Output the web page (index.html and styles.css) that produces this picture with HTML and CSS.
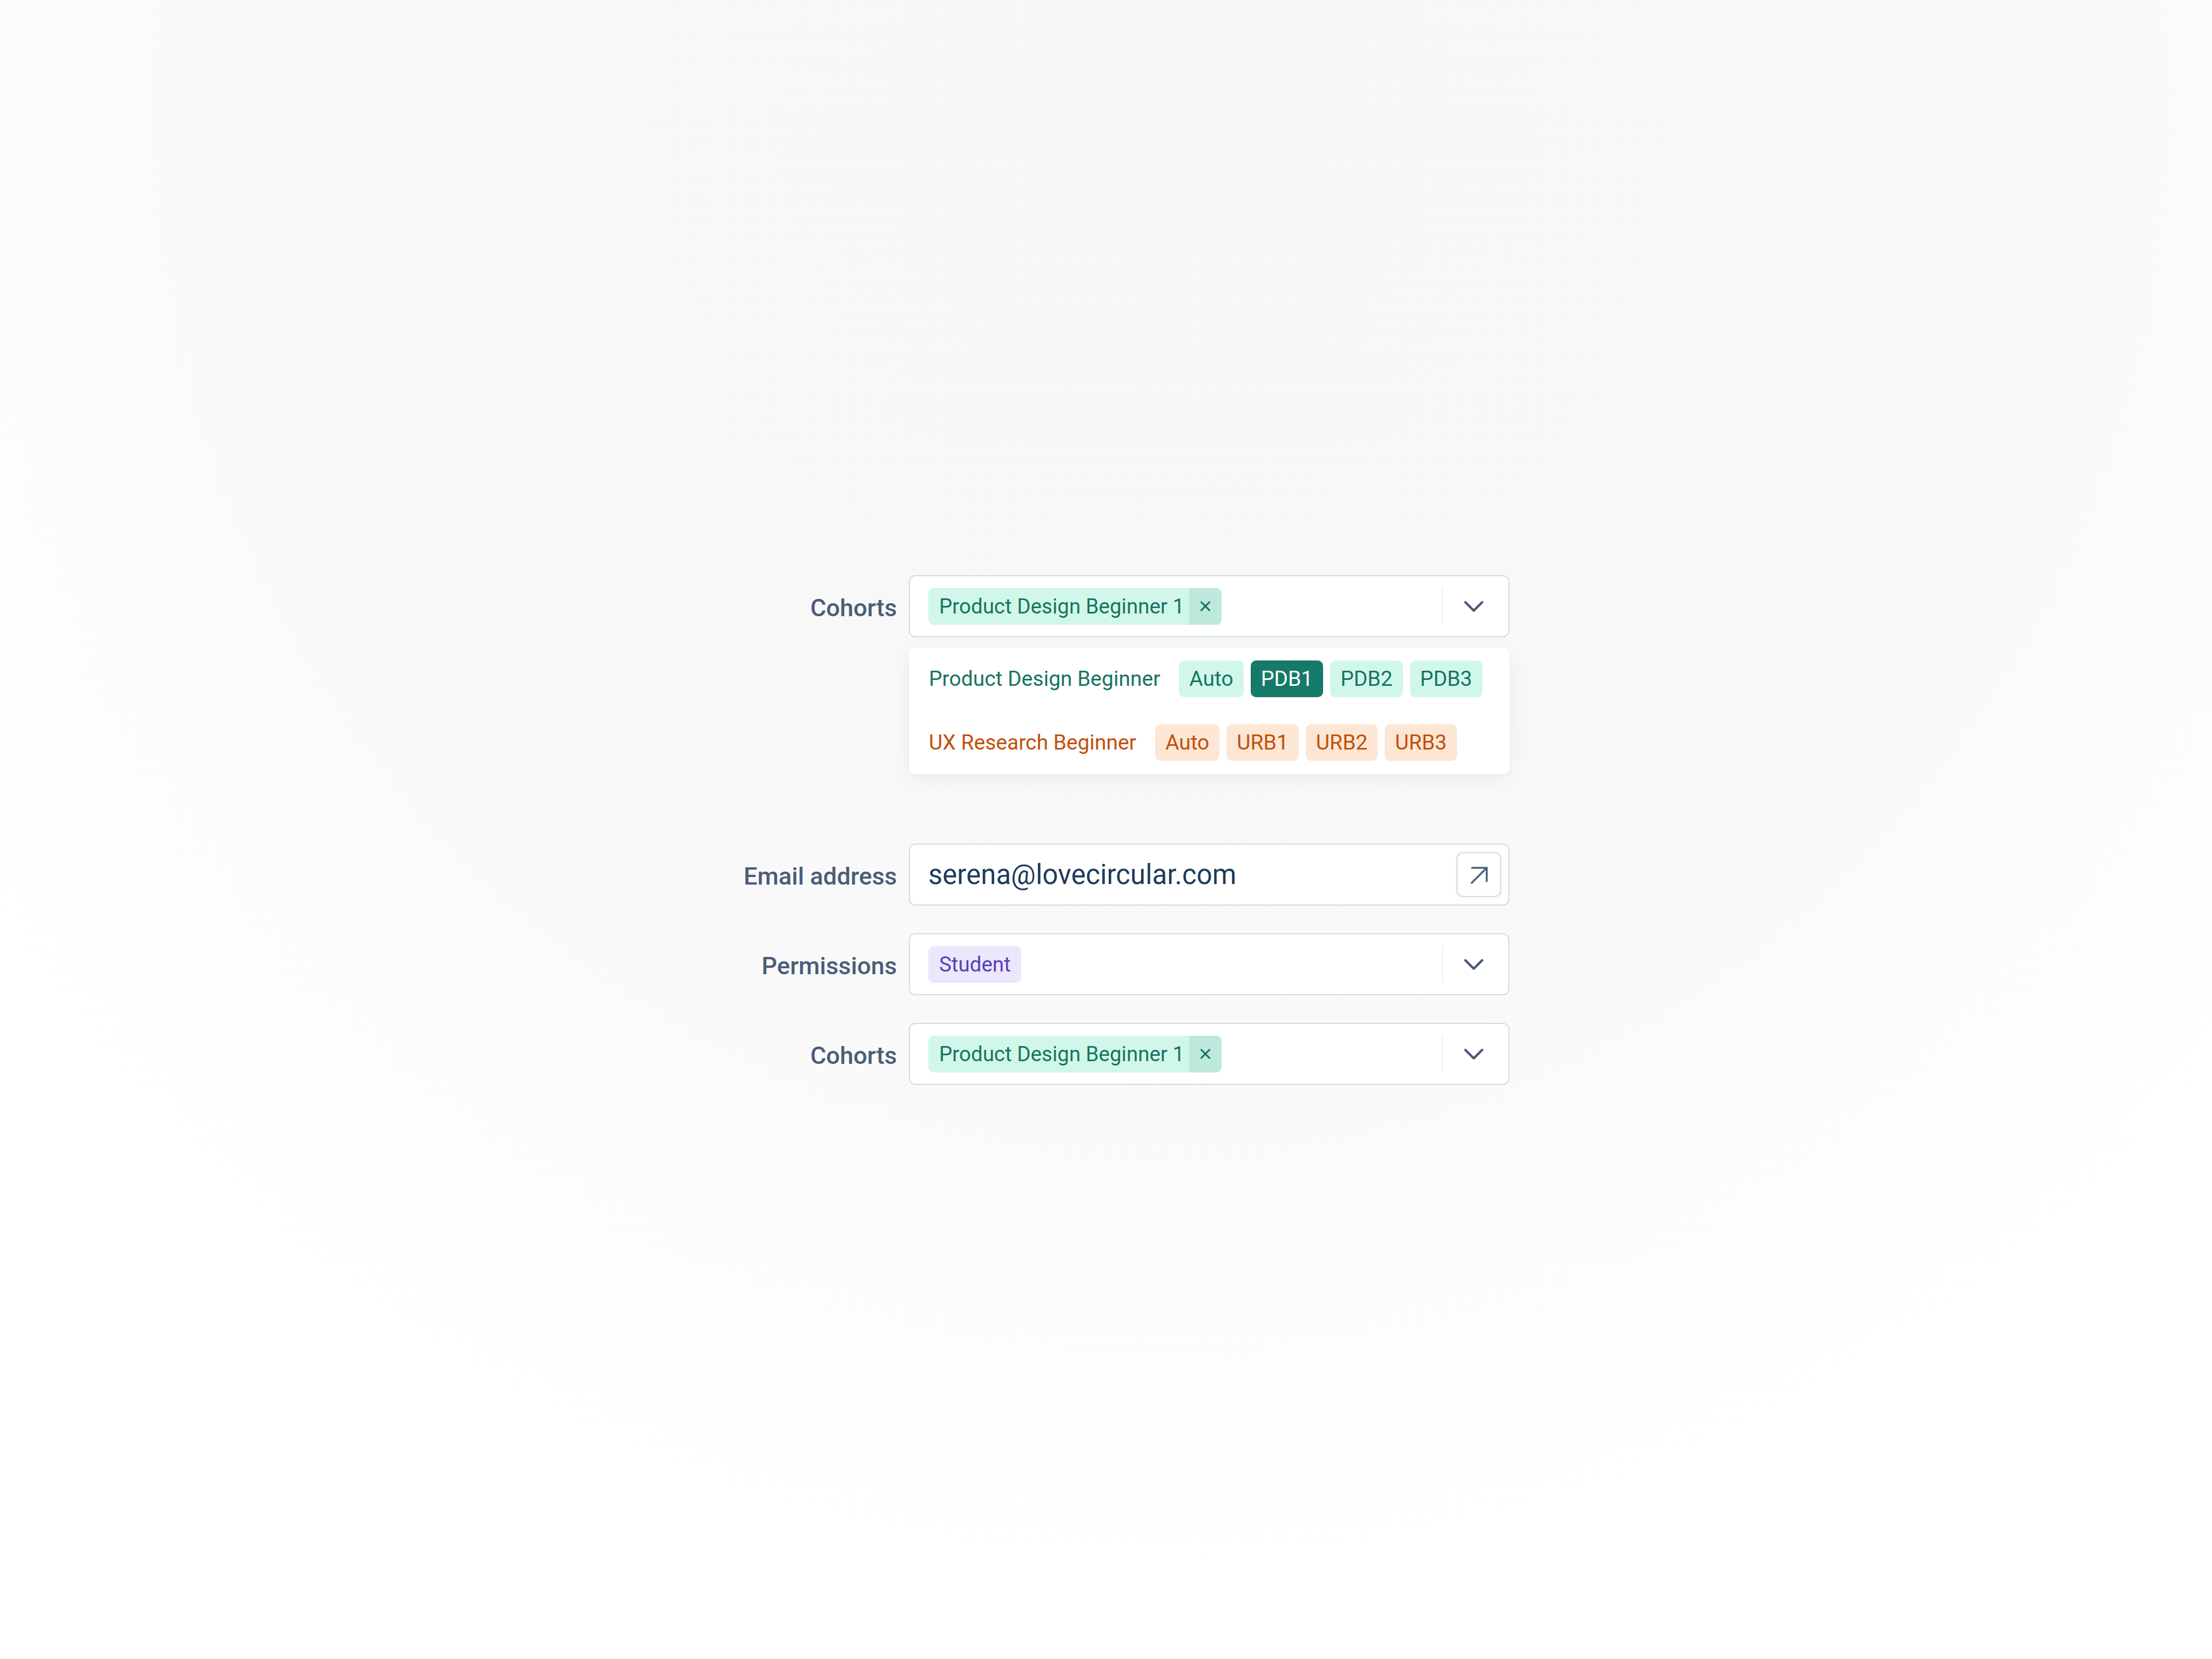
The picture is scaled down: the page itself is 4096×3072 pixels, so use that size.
FILE: index.html
```html
<!DOCTYPE html>
<html lang="en">
<head>
<meta charset="utf-8">
<title>Cohorts form</title>
<link rel="stylesheet" href="styles.css">
</head>
<body>
<main class="page">
  <div class="form">
    <div class="row">
      <div class="label">Cohorts</div>
      <div class="field-col">
        <div class="field">
          <div class="field-content">
            <span class="tag tag-teal"><span class="tag-text">Product Design Beginner 1</span><span class="tag-x"><svg viewBox="0 0 20 20" width="20" height="20"><path d="M2 2L18 18M18 2L2 18"/></svg></span></span>
          </div>
          <div class="field-sep"></div>
          <div class="field-caret"><svg viewBox="0 0 24 24" width="62" height="62"><path d="M6 9l6 6 6-6"/></svg></div>
        </div>
        <div class="menu">
          <div class="menu-row">
            <span class="menu-label teal">Product Design Beginner</span>
            <div class="pills">
              <span class="pill pill-teal">Auto</span>
              <span class="pill pill-teal-active">PDB1</span>
              <span class="pill pill-teal">PDB2</span>
              <span class="pill pill-teal">PDB3</span>
            </div>
          </div>
          <div class="menu-row">
            <span class="menu-label orange">UX Research Beginner</span>
            <div class="pills">
              <span class="pill pill-orange">Auto</span>
              <span class="pill pill-orange">URB1</span>
              <span class="pill pill-orange">URB2</span>
              <span class="pill pill-orange">URB3</span>
            </div>
          </div>
        </div>
      </div>
    </div>

    <div class="row row-email">
      <div class="label">Email address</div>
      <div class="field-col">
        <div class="field">
          <div class="field-content">
            <span class="email">serena@lovecircular.com</span>
          </div>
          <div class="open-btn"><svg viewBox="0 0 83 83" width="83" height="83"><path d="M27 58L56 29M27.5 29H56V55"/></svg></div>
        </div>
      </div>
    </div>

    <div class="row">
      <div class="label">Permissions</div>
      <div class="field-col">
        <div class="field">
          <div class="field-content">
            <span class="tag tag-purple"><span class="tag-text">Student</span></span>
          </div>
          <div class="field-sep"></div>
          <div class="field-caret"><svg viewBox="0 0 24 24" width="62" height="62"><path d="M6 9l6 6 6-6"/></svg></div>
        </div>
      </div>
    </div>

    <div class="row">
      <div class="label">Cohorts</div>
      <div class="field-col">
        <div class="field">
          <div class="field-content">
            <span class="tag tag-teal"><span class="tag-text">Product Design Beginner 1</span><span class="tag-x"><svg viewBox="0 0 20 20" width="20" height="20"><path d="M2 2L18 18M18 2L2 18"/></svg></span></span>
          </div>
          <div class="field-sep"></div>
          <div class="field-caret"><svg viewBox="0 0 24 24" width="62" height="62"><path d="M6 9l6 6 6-6"/></svg></div>
        </div>
      </div>
    </div>
  </div>
</main>
</body>
</html>
```

FILE: styles.css
```css
html, body {
  margin: 0;
  padding: 0;
}

body {
  min-height: 3072px;
  font-family: Roboto, "Liberation Sans", sans-serif;
  background-color: #ffffff;
  background-image: radial-gradient(ellipse 2600px 2700px at 2150px 200px,
      #f7f7f8 0%,
      #f8f8f8 45%,
      #f9f9f9 65%,
      #fcfcfc 83%,
      #ffffff 100%);
  background-repeat: no-repeat;
}

.page {
  padding-top: 1065px;
}

.form {
  display: flex;
  flex-direction: column;
  gap: 51px;
  margin-left: 1278px;
  width: 1517px;
}

.row {
  display: flex;
  align-items: flex-start;
  gap: 22px;
}

.row-email {
  margin-top: 77px;
}

.label {
  width: 383px;
  height: 115px;
  display: flex;
  align-items: center;
  justify-content: flex-end;
  padding-top: 6px;
  box-sizing: border-box;
  font-size: 45px;
  font-weight: 500;
  color: #4a5d78;
  white-space: nowrap;
}

.field-col {
  width: 1112px;
  display: flex;
  flex-direction: column;
  gap: 19px;
}

.field {
  height: 115px;
  box-sizing: border-box;
  border: 2px solid #d6dae1;
  border-radius: 12px;
  background: #ffffff;
  display: flex;
  align-items: center;
}

.field-content {
  flex: 1;
  display: flex;
  align-items: center;
  padding-left: 34px;
  min-width: 0;
}

.field-sep {
  width: 2px;
  height: 67px;
  background: #eceef1;
}

.field-caret {
  width: 121px;
  box-sizing: border-box;
  padding-right: 8px;
  display: flex;
  align-items: center;
  justify-content: center;
}

.field-caret svg {
  display: block;
  fill: none;
  stroke: #475b76;
  stroke-width: 1.75;
  stroke-linecap: round;
  stroke-linejoin: round;
}

.tag {
  display: inline-flex;
  align-items: stretch;
  height: 68px;
  border-radius: 10px;
  overflow: hidden;
  font-size: 38.5px;
  line-height: 68px;
}

.tag-text {
  padding: 0 19px 0 20px;
}

.tag-teal {
  background: #d1f7eb;
  color: #17745f;
}

.tag-teal .tag-text {
  padding-right: 9px;
}

.tag-x {
  width: 60px;
  background: #bde9dc;
  display: flex;
  align-items: center;
  justify-content: center;
}

.tag-x svg {
  display: block;
  width: 20px;
  height: 19px;
  fill: none;
  stroke: #17745f;
  stroke-width: 3.2;
  stroke-linecap: round;
}

.tag-purple {
  background: #ebe7fd;
  color: #5a3fb6;
}

.menu {
  background: #ffffff;
  border-radius: 12px;
  box-shadow: 0 10px 40px rgba(30, 40, 60, 0.05), 0 2px 6px rgba(30, 40, 60, 0.03);
  padding: 24px 37px 25px 37px;
  display: flex;
  flex-direction: column;
  gap: 50px;
}

.menu-row {
  display: flex;
  align-items: center;
  gap: 35px;
}

.menu-label {
  font-size: 39px;
  white-space: nowrap;
}

.teal {
  color: #17745f;
}

.orange {
  color: #c2500b;
}

.pills {
  display: flex;
  gap: 13px;
}

.pill {
  height: 68px;
  line-height: 68px;
  padding: 0 19px;
  border-radius: 10px;
  font-size: 39px;
}

.pill-teal {
  background: #d1f7eb;
  color: #17745f;
}

.pill-teal-active {
  background: #167a6a;
  color: #ffffff;
}

.pill-orange {
  background: #fee6d5;
  color: #c2500b;
}

.email {
  font-size: 51px;
  color: #1f3a5c;
  white-space: nowrap;
}

.open-btn {
  width: 83px;
  height: 83px;
  box-sizing: border-box;
  margin-right: 13px;
  border: 2px solid #d5dae1;
  border-radius: 12px;
  background: #ffffff;
  box-shadow: 0 2px 10px rgba(30, 40, 60, 0.04);
  position: relative;
}

.open-btn svg {
  position: absolute;
  left: -2px;
  top: -2px;
  fill: none;
  stroke: #4a607c;
  stroke-width: 3.5;
  stroke-linecap: butt;
}
```
